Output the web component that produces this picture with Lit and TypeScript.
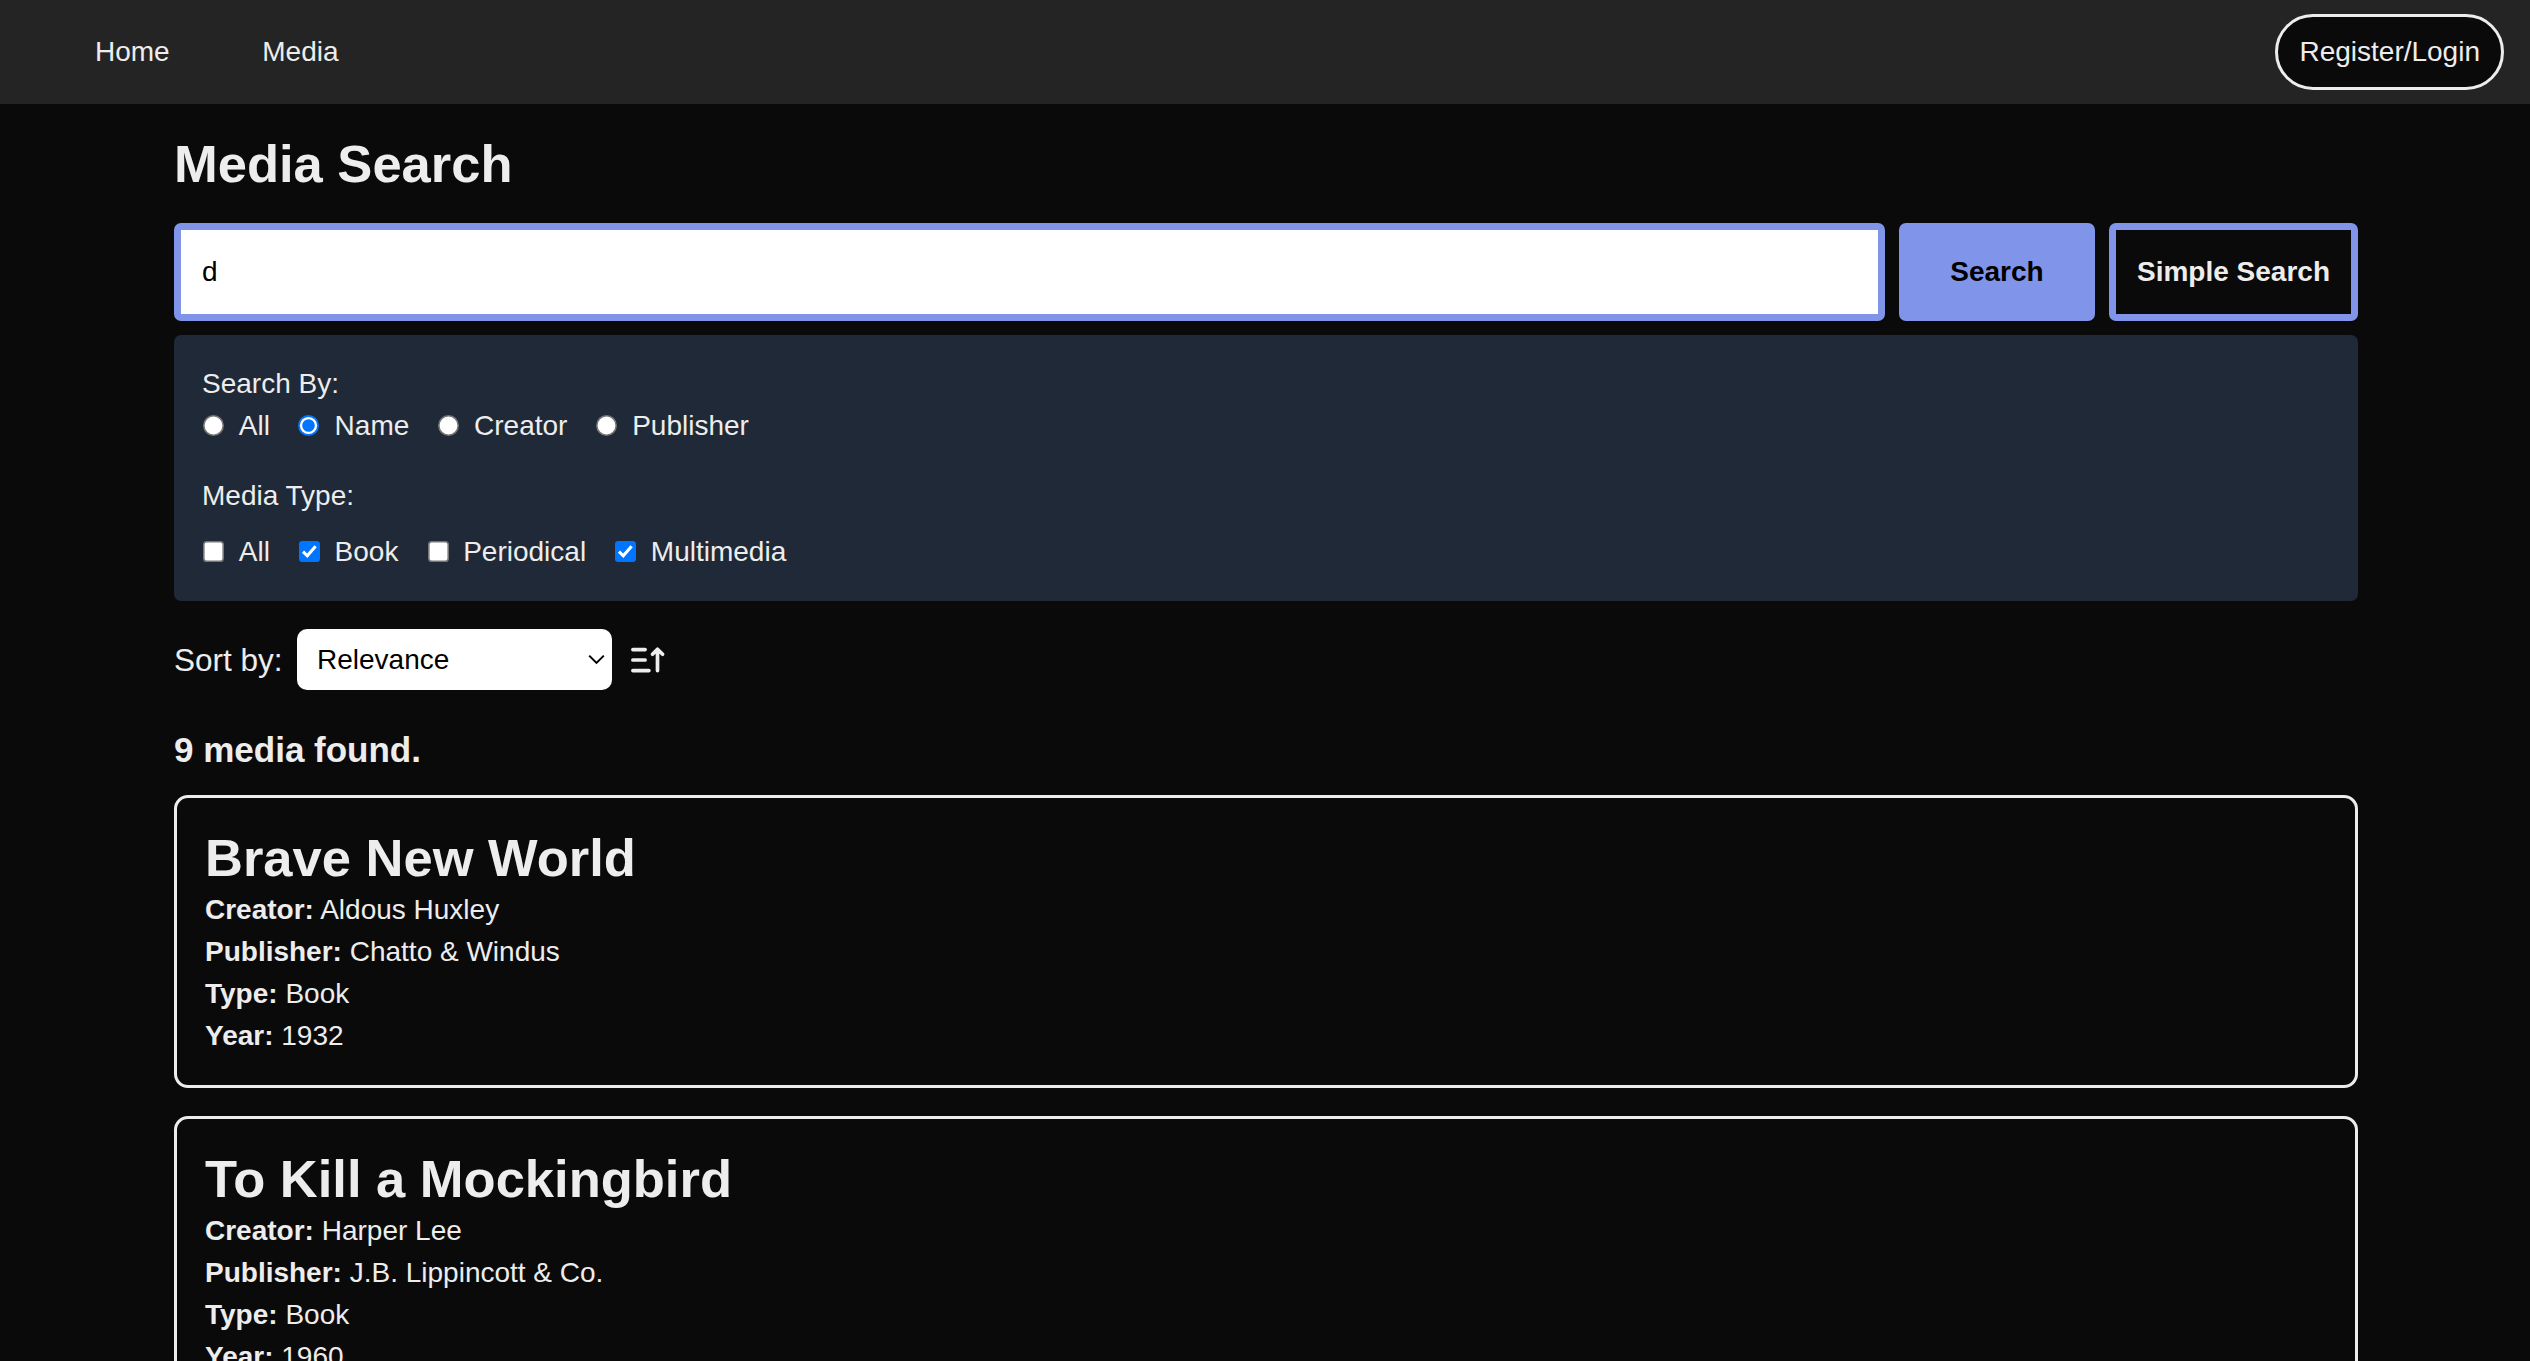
import { LitElement, html, svg, css } from "lit";
import { customElement, property, state } from "lit/decorators.js";

interface Media {
  title: string;
  creator: string;
  publisher: string;
  type: string;
  year: number;
}

const RESULTS: Media[] = [
  { title: "Brave New World", creator: "Aldous Huxley", publisher: "Chatto & Windus", type: "Book", year: 1932 },
  { title: "To Kill a Mockingbird", creator: "Harper Lee", publisher: "J.B. Lippincott & Co.", type: "Book", year: 1960 },
];

@customElement("site-header")
class SiteHeader extends LitElement {
  static styles = css`
    :host {
      display: flex;
      align-items: center;
      height: 104px;
      box-sizing: border-box;
      padding: 0 26px 0 95px;
      background: #242424;
    }
    .links {
      display: flex;
      gap: 92.6px;
      flex: 1;
    }
    .link {
      color: inherit;
      text-decoration: none;
    }
    .login {
      box-sizing: border-box;
      height: 76px;
      padding: 0 21px;
      border: 3px solid #ededed;
      border-radius: 38px;
      background: #0a0a0a;
      color: #ededed;
      font: inherit;
    }
  `;
  render() {
    return html`
      <nav class="links">
        <a class="link" href="#">Home</a>
        <a class="link" href="#">Media</a>
      </nav>
      <button class="login">Register/Login</button>
    `;
  }
}

@customElement("media-card")
class MediaCard extends LitElement {
  @property({ attribute: false }) media!: Media;
  static styles = css`
    :host {
      display: block;
      box-sizing: border-box;
      height: 293px;
      padding: 27.5px 28px;
      border: 3px solid #ededed;
      border-radius: 14px;
    }
    .title {
      margin: 0;
      font-size: 52.5px;
      line-height: 63px;
      font-weight: 700;
    }
    .line {
      margin: 0;
    }
  `;
  render() {
    const m = this.media;
    return html`
      <h2 class="title">${m.title}</h2>
      <p class="line"><strong>Creator:</strong> ${m.creator}</p>
      <p class="line"><strong>Publisher:</strong> ${m.publisher}</p>
      <p class="line"><strong>Type:</strong> ${m.type}</p>
      <p class="line"><strong>Year:</strong> ${m.year}</p>
    `;
  }
}

@customElement("choice-option")
class ChoiceOption extends LitElement {
  @property() kind: "radio" | "checkbox" = "radio";
  @property() label = "";
  @property({ type: Boolean }) checked = false;

  static styles = css`
    :host {
      display: flex;
      align-items: center;
      cursor: default;
    }
    .mark {
      display: block;
      width: 21px;
      height: 21px;
      flex: none;
    }
    .radio {
      margin: 0 15.15px 0 0.6px;
    }
    .checkbox {
      margin: 0 14.65px 0 1.1px;
    }
  `;

  private mark() {
    if (this.kind === "radio") {
      return this.checked
        ? svg`<circle cx="10.5" cy="10.5" r="10.5" fill="#0075ff"/><circle cx="10.5" cy="10.5" r="8.6" fill="#fff"/><circle cx="10.5" cy="10.5" r="6.3" fill="#0075ff"/>`
        : svg`<circle cx="10.5" cy="10.5" r="9.7" fill="#fff" stroke="#767676" stroke-width="1.6"/>`;
    }
    return this.checked
      ? svg`<rect width="21" height="21" rx="3.2" fill="#0075ff"/><path d="M4 10.6 8.3 14.8 16.6 5.2" fill="none" stroke="#fff" stroke-width="3.1"/>`
      : svg`<rect x=".8" y=".8" width="19.4" height="19.4" rx="2.8" fill="#fff" stroke="#767676" stroke-width="1.6"/>`;
  }

  render() {
    return html`
      <svg class="mark ${this.kind}" viewBox="0 0 21 21" role=${this.kind} aria-checked=${this.checked}>${this.mark()}</svg>
      <span>${this.label}</span>
    `;
  }
}

@customElement("app-root")
class AppRoot extends LitElement {
  @state() private searchBy = "Name";
  @state() private types = ["Book", "Multimedia"];

  static styles = css`
    :host {
      display: block;
      height: 1361px;
      overflow: hidden;
      background: #0a0a0a;
      color: #ededed;
      font-family: "Liberation Sans", Arial, Helvetica, sans-serif;
      font-size: 28px;
      line-height: 42px;
    }
    .main {
      width: 2184px;
      margin: 0 auto 0 174px;
      padding-top: 28px;
    }
    .heading {
      margin: 0 0 28px;
      font-size: 52.5px;
      line-height: 63px;
    }
    .search-row {
      display: flex;
      gap: 14px;
      height: 98px;
      margin-bottom: 14px;
    }
    .query {
      flex: 1;
      min-width: 0;
      box-sizing: border-box;
      padding: 0 21px;
      border: 7px solid #8094ea;
      border-radius: 7px;
      outline: none;
      background: #fff;
      color: #000;
      font: inherit;
    }
    .button {
      box-sizing: border-box;
      padding: 0;
      border: 7px solid #8094ea;
      border-radius: 7px;
      font: inherit;
      font-weight: 700;
    }
    .primary {
      width: 196px;
      background: #8094ea;
      color: #000;
    }
    .secondary {
      width: 249px;
      background: #0a0a0a;
      color: #ededed;
    }
    .filters {
      box-sizing: border-box;
      height: 266px;
      padding: 27.5px 28px;
      border-radius: 7px;
      background: #1f2937;
    }
    .options {
      display: flex;
      gap: 28px;
    }
    .types-label {
      margin-top: 28px;
      margin-bottom: 14px;
    }
    .sort {
      display: flex;
      align-items: center;
      height: 61px;
      margin-top: 28px;
    }
    .sort-label {
      width: 123px;
      font-size: 31.5px;
    }
    .select {
      display: flex;
      align-items: center;
      justify-content: space-between;
      box-sizing: border-box;
      width: 315px;
      height: 61px;
      padding: 0 7px 0 20px;
      border-radius: 10px;
      background: #fff;
      color: #000;
    }
    .chevron {
      width: 17px;
      height: 11px;
    }
    .order {
      width: 38px;
      height: 31px;
      margin-left: 17px;
    }
    .count {
      margin: 35px 0 21px;
      font-size: 35px;
      line-height: 49px;
    }
    .results {
      display: flex;
      flex-direction: column;
      gap: 28px;
    }
  `;

  private toggle(name: string) {
    this.types = this.types.includes(name) ? this.types.filter((t) => t !== name) : [...this.types, name];
  }

  render() {
    return html`
      <site-header></site-header>
      <main class="main">
        <h1 class="heading">Media Search</h1>
        <div class="search-row">
          <input class="query" type="text" .value=${"d"} />
          <button class="button primary">Search</button>
          <button class="button secondary">Simple Search</button>
        </div>
        <section class="filters">
          <div>Search By:</div>
          <div class="options">
            ${["All", "Name", "Creator", "Publisher"].map(
              (n) => html`<choice-option kind="radio" label=${n} ?checked=${this.searchBy === n} @click=${() => (this.searchBy = n)}></choice-option>`
            )}
          </div>
          <div class="types-label">Media Type:</div>
          <div class="options">
            ${["All", "Book", "Periodical", "Multimedia"].map(
              (n) => html`<choice-option kind="checkbox" label=${n} ?checked=${this.types.includes(n)} @click=${() => this.toggle(n)}></choice-option>`
            )}
          </div>
        </section>
        <div class="sort">
          <span class="sort-label">Sort by:</span>
          <div class="select">
            <span>Relevance</span>
            <svg class="chevron" viewBox="0 0 17 11" fill="none" stroke="#000" stroke-width="2">
              <path d="M1.2 1.6 8.5 8.9 15.8 1.6" />
            </svg>
          </div>
          <svg class="order" viewBox="0 0 38 31" fill="none" stroke="#ededed" stroke-width="3.7" stroke-linecap="round" stroke-linejoin="round">
            <path d="M3.9 5.6H16.1M3.9 16H16.1M3.9 26.6H19.9M28.5 26.6V5.4M23.5 10.3 28.5 5.3 33.6 10.3" />
          </svg>
        </div>
        <h3 class="count">9 media found.</h3>
        <div class="results">${RESULTS.map((m) => html`<media-card .media=${m}></media-card>`)}</div>
      </main>
    `;
  }
}
